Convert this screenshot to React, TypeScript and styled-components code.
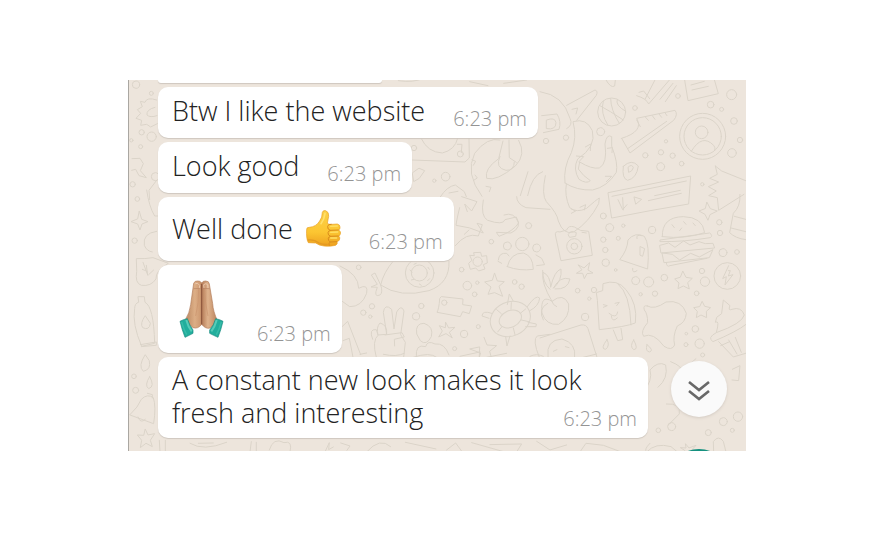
import React from "react";
import styled, { createGlobalStyle } from "styled-components";

const GlobalStyle = createGlobalStyle`
  * { box-sizing: border-box; }
  body {
    margin: 0;
    background: #ffffff;
    font-family: "Open Sans", "Noto Sans", sans-serif;
  }
`;

const Page = styled.main`
  padding: 80px 139px 80px 128px;
`;

const Chat = styled.section`
  position: relative;
  overflow: hidden;
  border-left: 1px solid #aaa7a2;
  background: #ede5dc;
  padding-bottom: 13px;
`;

const Wallpaper = styled.svg`
  position: absolute;
  inset: 0;
  width: 100%;
  height: 100%;
  fill: none;
  stroke: #dbd4c9;
  stroke-width: 3;
  stroke-linecap: round;
  stroke-linejoin: round;
`;

const MessageList = styled.ol`
  position: relative;
  display: flex;
  flex-direction: column;
  align-items: flex-start;
  gap: 4px;
  margin: 0;
  padding: 0 98px 0 29px;
  list-style: none;
`;

const PreviousBubble = styled.li`
  width: 224px;
  max-width: 100%;
  height: 3px;
  border-radius: 0 0 10px 10px;
  background: #ffffff;
  box-shadow: 0 1px 1px #cfc7bf;
`;

const Bubble = styled.li<{ $overlap?: boolean }>`
  display: grid;
  grid-template-columns: ${(p) => (p.$overlap ? "1fr" : "auto auto")};
  column-gap: 28px;
  max-width: 490px;
  padding: 0 11px 0 14px;
  border-radius: 10px;
  background: #ffffff;
  box-shadow: 0 1px 1px #cfc7bf;

  > * { grid-row: 1; }
  ${(p) => p.$overlap && "> * { grid-column: 1; }"}
`;

const textPadding = {
  single: "7px 0 11px",
  multi: "6px 0 9px",
  emoji: "13px 0 14px",
  largeEmoji: "15px 0",
};

const Text = styled.p<{ $kind?: keyof typeof textPadding }>`
  display: flex;
  align-items: center;
  gap: 13px;
  margin: 0;
  padding: ${(p) => textPadding[p.$kind ?? "single"]};
  color: #222222;
  font-size: 27px;
  font-weight: 300;
  line-height: 33px;
`;

const Time = styled.time`
  align-self: end;
  justify-self: end;
  padding-bottom: 8px;
  color: #949494;
  font-size: 20px;
  font-weight: 300;
  line-height: 22px;
  white-space: nowrap;
`;

const ScrollButton = styled.button`
  position: absolute;
  right: 19px;
  bottom: 34px;
  display: grid;
  place-items: center;
  width: 56px;
  height: 56px;
  padding: 0;
  border: 0;
  border-radius: 50%;
  background: #fafafa;
  box-shadow: 0 1px 3px #d3cbc3;
  cursor: pointer;
`;

const SendBadge = styled.div`
  position: absolute;
  right: 15px;
  bottom: -62px;
  width: 64px;
  height: 64px;
  border-radius: 50%;
  background: #15917f;
`;

const ThumbsUp = () => (
  <svg width="35" height="37" viewBox="33 29 105 111" role="img" aria-label="thumbs up">
    <defs>
      <linearGradient id="thumb" x1="0" y1="0" x2="0" y2="1">
        <stop offset="0" stopColor="#fbd04a" />
        <stop offset="0.6" stopColor="#fcc632" />
        <stop offset="1" stopColor="#eda01f" />
      </linearGradient>
    </defs>
    <path
      d="M35 87Q34 81 43 81Q64 79 74 62Q82 52 82 36Q84 29 92 31Q102 34 101 48L97 69Q100 73 111 72L127 71Q135 73 135 80Q136 87 131 89Q139 93 136 101Q135 106 131 107Q137 112 133 119Q131 123 126 124Q129 131 122 135Q107 139 87 137Q73 136 62 128L40 127Q33 115 35 87Z"
      fill="url(#thumb)"
      stroke="#e8a026"
      strokeWidth="2"
    />
    <path d="M131 89L106 90Q97 88 98 78Q99 71 110 72M131 107L107 108Q98 105 99 97Q100 91 107 90M126 124L106 125Q98 121 100 114Q101 109 107 108M106 125Q99 128 103 136" fill="none" stroke="#d98b1b" strokeWidth="3" />
    <path d="M107 78L127 77M107 96L128 95M107 113L125 113" stroke="#ffdf65" strokeWidth="4" strokeLinecap="round" />
    <path d="M38 119Q57 116 72 128Q86 134 98 132" fill="none" stroke="#e49a22" strokeWidth="4" />
    <path d="M90 39Q88 57 78 70" fill="none" stroke="#ffe06e" strokeWidth="5" strokeLinecap="round" />
  </svg>
);

const FoldedHands = () => (
  <svg width="57" height="58" viewBox="6 29 171 174" role="img" aria-label="folded hands">
    <defs>
      <linearGradient id="skin" x1="0" y1="0" x2="1" y2="0">
        <stop offset="0" stopColor="#b9855f" />
        <stop offset="0.3" stopColor="#dcae86" />
        <stop offset="0.46" stopColor="#cf9b73" />
        <stop offset="0.52" stopColor="#b67d59" />
        <stop offset="0.7" stopColor="#dfb38d" />
        <stop offset="1" stopColor="#b9815b" />
      </linearGradient>
    </defs>
    <path
      d="M71 39Q74 31 83 32Q91 31 95 38Q99 31 107 32Q117 32 118 41L128 100Q129 122 143 153L120 173Q107 177 95 162Q84 177 69 172L45 150Q59 128 62 103Z"
      fill="url(#skin)"
      stroke="#b27c59"
      strokeWidth="2"
    />
    <path d="M95 41L95 162" fill="none" stroke="#895239" strokeWidth="3" />
    <path d="M86 55Q87 97 77 137M103 55Q105 97 114 137" fill="none" stroke="#ca946e" strokeWidth="2" />
    <path d="M76 40Q84 36 89 45L88 54M102 53L101 43Q108 37 113 43L114 54" fill="none" stroke="#edc9ad" strokeWidth="3" />
    <path d="M71 55L92 54M98 54L119 55" stroke="#b98463" strokeWidth="2" />
    <path d="M30 153Q40 147 52 145Q58 164 69 179L69 189Q58 195 45 201Q36 179 30 153Z" fill="#22ae9d" stroke="#168a7e" strokeWidth="2" />
    <path d="M159 153Q149 147 137 145Q132 164 119 179L119 189Q130 195 144 201Q153 179 159 153Z" fill="#22ae9d" stroke="#168a7e" strokeWidth="2" />
    <path d="M49 149Q54 169 65 183M140 149Q135 169 124 183" fill="none" stroke="#56cbb8" strokeWidth="6" />
    <path d="M35 155Q41 177 50 193M154 155Q148 177 139 193" fill="none" stroke="#38bca8" strokeWidth="4" />
  </svg>
);

const rightDots = [
  [285, 114, 7], [182, 185, 12], [78, 203, 8], [18, 213, 8], [414, 78, 7], [512, 104, 10], [545, 118, 6],
  [575, 74, 15], [582, 153, 10], [600, 210, 8], [576, 249, 13], [378, 214, 5], [316, 256, 8], [363, 247, 8],
  [398, 257, 8], [425, 281, 7], [362, 290, 12], [487, 343, 5], [190, 438, 9], [209, 473, 12], [250, 467, 5],
  [190, 509, 8], [235, 505, 6], [196, 540, 8], [197, 578, 11], [227, 600, 4], [336, 480, 11], [538, 457, 8],
  [540, 489, 8], [549, 548, 12], [591, 546, 7], [287, 632, 12], [326, 636, 15], [373, 623, 10], [486, 603, 8],
  [495, 635, 14], [470, 670, 7], [345, 671, 8], [302, 673, 5], [162, 660, 8], [113, 662, 7], [148, 686, 5],
  [135, 741, 11], [466, 777, 10], [479, 821, 14], [438, 824, 6], [439, 791, 4], [488, 855, 6],
];

const middleDots = [
  [222, 234, 8], [283, 332, 5], [317, 320, 13], [361, 252, 9], [56, 592, 7], [365, 599, 7], [382, 647, 13],
  [412, 638, 5], [404, 673, 7], [454, 515, 7], [566, 467, 9], [524, 636, 7], [545, 650, 8], [244, 708, 8],
  [228, 739, 11], [96, 709, 8], [70, 728, 8], [91, 740, 5], [415, 770, 6], [372, 792, 11], [344, 836, 6],
];

const leftDots = [
  [48, 44, 11], [65, 187, 8], [95, 200, 14], [62, 230, 6], [34, 211, 5], [38, 343, 8], [106, 320, 12],
  [52, 387, 7], [44, 512, 8], [42, 919, 7], [47, 961, 9], [94, 70, 6], [130, 26, 5],
];

const Dots = ({ items }: { items: number[][] }) => (
  <>
    {items.map(([x, y, r]) => (
      <circle key={`${x}-${y}`} cx={x} cy={y} r={r} />
    ))}
  </>
);

const Doodles = () => (
  <Wallpaper viewBox="129 80 617 372" preserveAspectRatio="xMaxYMin slice" aria-hidden="true">
    <g transform="translate(540 70) scale(.3333)">
      <Dots items={rightDots} />
      <circle cx="215" cy="126" r="42" />
      <path d="M178 106Q210 123 250 150M190 93Q180 130 204 166M212 85Q212 120 238 160M232 88Q224 105 257 124" />
      <path d="M0 65Q70 75 90 145Q100 165 80 176M80 106L165 60Q175 63 169 76L110 151M96 118L113 114L108 132" />
      <path d="M5 137L51 132Q65 155 57 178L10 188M20 150Q45 140 48 158Q48 181 20 176Z" />
      <path d="M290 77Q320 86 326 102L390 28M350 20L315 88M297 67L311 63L329 86M360 88L399 40M376 95L409 47" />
      <path d="M434 30L444 92L535 71L520 18M456 60L505 49M453 45L493 34M197 28Q212 56 224 48L226 30" />
      <path d="M245 205L270 249L401 151Q415 133 405 121L290 145Q313 184 245 205ZM263 236L380 154M290 150L301 170M316 141L325 151M337 137L345 148M357 132L365 142M374 127L381 137" />
      <circle cx="488" cy="199" r="69" />
      <circle cx="488" cy="199" r="56" />
      <circle cx="485" cy="187" r="19" />
      <path d="M454 244Q486 190 521 226Q528 233 524 242" />
      <path d="M75 339Q69 294 94 248Q112 202 99 155Q140 143 157 182Q170 230 113 267Q98 297 117 328Q140 343 151 332Q129 318 115 297L119 276Q155 298 178 294Q203 281 195 222Q200 190 215 200L215 228Q235 280 229 307Q203 350 158 360Q110 362 75 339M109 258L131 260L116 276M196 319L215 319L199 335M202 235L217 233L216 248M136 231L152 222L151 242" />
      <path d="M79 342Q73 377 89 413Q110 430 140 415Q168 390 178 384L176 401Q148 456 101 486Q70 496 55 453Q52 430 19 395Q4 375 16 317M120 412L137 404L133 420M94 417L107 423L94 430" />
      <path d="M250 289Q275 265 295 288Q290 325 263 331Q245 326 250 289ZM265 291Q276 281 280 293Q277 305 267 307Z" />
      <path d="M205 368L452 318L446 402Q330 421 216 444ZM216 379L439 333M234 389L248 419L261 404M248 383L250 420M283 381L305 388L288 402ZM325 392L424 370M344 377L421 361" />
      <path d="M526 288L545 303L617 332M526 288L532 313L509 325L536 336L505 350L529 363L506 377L532 383L536 421L612 373" />
      <path d="M600 373Q602 410 580 430L569 488Q586 505 617 509M583 439L617 448M573 474L617 485" />
      <path d="M367 500Q365 441 430 440Q488 441 494 488Q435 508 367 500ZM361 510L509 489Q520 497 511 503Q430 516 361 515ZM360 526L386 519L405 532L431 513L450 525L477 515L496 521L519 520L524 534L364 549ZM367 549L397 553L419 570L452 550L478 561L519 539L508 563L373 578ZM379 578Q380 593 390 587L501 565M396 464L403 473M431 455L438 463M459 459L466 467M419 482L425 474" />
      <path d="M46 494Q44 482 60 486L80 480Q85 465 103 471L121 481L146 484L157 556L64 572ZM85 493Q92 479 109 488L107 499L90 502ZM126 487L139 489" />
      <circle cx="103" cy="529" r="23" />
      <circle cx="103" cy="529" r="10" />
      <path d="M240 568Q262 541 264 510Q285 485 313 499Q330 522 323 596ZM278 595Q276 613 291 602M291 506Q287 492 304 497M301 530L314 536L308 559L301 556Z" />
      <path d="M501 397L511 416L532 423L510 434L504 451L495 433L477 423L495 416ZM115 585L132 594L149 578L144 600L159 609L141 611L133 626L128 610L109 610L125 600Z" />
      <path d="M429 604L438 622L457 625L443 638L448 657L430 648L414 656L417 639L404 627L420 622ZM487 695L494 709L512 713L499 724L500 743L483 735L469 743L472 724L461 713L478 710Z" />
      <circle cx="562" cy="618" r="40" />
      <path d="M566 587L548 626L559 620L555 645L579 614L565 618L571 602L565 602" />
      <path d="M172 690L169 668L188 662L189 641Q232 626 258 659Q294 702 286 759Q259 770 179 779ZM234 642Q270 670 273 765M220 780L233 812L248 809L243 775M190 704L202 707L190 712M225 700L238 697L230 707M207 730Q230 749 233 726M214 737Q216 760 232 744" />
      <path d="M36 694Q3 639 9 607Q31 616 32 652Q43 603 63 597Q67 631 40 655Q60 617 90 627Q83 660 45 657M36 694Q0 670 6 729Q18 767 56 763Q90 743 86 702Q70 667 36 694Q38 705 50 710" />
      <path d="M322 708Q343 721 378 696Q425 688 439 730Q437 758 412 768Q397 800 404 825Q396 844 372 829Q340 785 311 799Q300 785 323 758Q323 731 313 720Q308 704 322 708Z" />
      <path d="M545 730L550 690L570 707Q563 724 576 718Q604 709 613 735Q606 761 529 788Q540 748 526 757L530 743ZM529 788Q500 803 519 815Q590 785 617 764M536 815L580 861L617 850M542 827L569 815M566 810L591 852M586 802L604 847" />
      <path d="M0 804L123 765Q139 763 144 776L171 862M24 860Q17 810 66 807Q110 820 104 862M40 844L51 839M76 830L87 833" />
      <path d="M201 809Q179 838 197 838Q211 827 201 809ZM281 810Q268 829 281 839Q297 839 281 810ZM321 824Q315 845 329 846Q343 841 321 824Z" />
      <path d="M308 970Q340 930 330 900Q354 872 377 885Q386 925 354 952M392 875Q430 890 424 905L468 866M407 953Q430 917 485 913M379 1002Q424 999 418 1032L385 1065M577 898L600 887L596 932L576 930" />
      <path d="M437 1122L447 1134L468 1126L452 1144L464 1154L445 1150L435 1158L434 1141L421 1133L437 1134ZM320 1146Q346 1117 393 1130L417 1150M521 1146L520 1115Q535 1094 550 1114L558 1146" />
      <circle cx="395" cy="1070" r="12" />
      <circle cx="355" cy="1081" r="7" />
      <circle cx="505" cy="1088" r="9" />
      <circle cx="550" cy="1055" r="12" />
      <circle cx="577" cy="1081" r="6" />
      <circle cx="594" cy="1040" r="14" />
    </g>

    <g transform="translate(340 70) scale(.3333)">
      <Dots items={middleDots} />
      <path d="M175 32Q220 39 250 25M389 35L444 47M491 40L560 30M215 270L375 276L388 264L387 205M244 206Q263 247 307 249Q345 240 353 205M352 223L366 223L364 248" />
      <path d="M480 210Q442 200 404 250Q374 310 426 379M536 211Q560 254 526 288Q470 335 440 325Q432 297 476 266L489 213M480 259Q464 294 498 301Q523 302 523 276M405 315L412 324L401 331M396 269L407 274L400 286M438 349L453 352L448 365M507 210L508 263L529 277" />
      <path d="M238 295L254 302L238 325L221 335L217 310ZM300 382Q321 349 346 345L373 365L379 380M327 369L354 364M541 377L564 305M563 377Q576 315 608 305" />
      <path d="M430 390Q421 439 443 451Q490 467 495 449L529 441Q548 473 513 489L469 487L477 499Q520 484 536 459Q523 424 492 435M530 380Q530 402 558 413L630 418M365 380L411 395L395 423L374 402L382 425M359 413Q350 449 348 466Q388 470 430 489L411 460L427 464L415 498Q379 487 346 527M373 493L387 480" />
      <circle cx="502" cy="528" r="12" />
      <circle cx="547" cy="522" r="20" />
      <circle cx="590" cy="534" r="12" />
      <path d="M502 590Q511 549 550 549Q579 557 580 598Q540 604 502 590ZM475 570Q477 547 500 550L507 558M485 580L474 574M588 555L605 565L614 584L590 587" />
      <path d="M402 548L422 547L425 559L440 557L442 579L430 584L435 597L416 603L407 594L391 598L386 580L396 571L389 556L402 557Z" />
      <circle cx="413" cy="575" r="14" />
      <path d="M122 645Q130 608 160 573M327 574Q330 640 267 662Q180 685 122 645L105 609L94 615L112 643L93 651L112 652Q99 684 120 675Q130 667 122 645" />
      <circle cx="239" cy="609" r="43" />
      <circle cx="238" cy="609" r="24" />
      <path d="M210 600L216 607M214 630L222 628M238 642L244 646M263 632L269 626M268 598L264 592M222 583L229 580" />
      <path d="M464 610L472 633L493 635L477 649L488 679L464 668L444 673L453 651L434 636L456 631ZM305 680L369 687L368 704L395 708L388 731L368 725L361 740L291 727Q297 717 299 687Z" />
      <circle cx="313" cy="698" r="8" />
      <ellipse cx="511" cy="747" rx="62" ry="51" transform="rotate(-25 511 747)" />
      <ellipse cx="511" cy="747" rx="35" ry="25" transform="rotate(-25 511 747)" />
      <path d="M502 704L508 672L519 692M562 710Q588 672 599 684Q597 708 570 722M564 757L589 762L588 770L557 770M497 800L501 828L510 798M447 745L426 738Q427 720 455 730M470 719L484 731M514 698L513 718M557 717L541 730M566 755L544 750M525 794L520 774M473 786L486 770" />
      <path d="M109 862Q95 811 115 795L140 793L130 727Q134 699 155 718L162 777L170 726Q184 702 192 723L182 794L196 817L191 862M135 795L186 788L193 801L163 808L164 828M98 808Q85 776 109 779L114 795Q108 772 120 759Q143 765 140 793" />
      <path d="M230 791Q225 760 252 760Q282 770 274 800Q259 829 242 813ZM229 862Q225 820 257 830Q262 810 285 822Q314 818 327 855M317 757L326 774L345 772L328 787L337 804L318 791L296 801L307 783L298 767L315 773Z" />
      <path d="M432 802L441 825L470 827L449 844L454 862M418 862L422 849L389 837L418 831ZM598 862Q576 808 592 798L630 793M610 750Q592 717 623 700M0 588Q56 613 56 655Q86 639 80 670Q65 711 29 710L4 692M0 776L23 754L62 854M9 812L28 805L39 862M608 601Q607 637 630 658" />
    </g>

    <g transform="translate(120 70) scale(.3333)">
      <Dots items={leftDots} />
      <path d="M110 90Q80 80 75 97L61 94L67 110L52 119L62 130L48 145L65 151L62 166L80 163L92 171L112 161M105 112Q78 119 81 135Q90 144 111 137M36 266L60 265L70 281L61 302L79 323L57 317L47 298L35 301M89 389L87 361L110 331" />
      <path d="M58 424L65 448L84 455L66 462L60 480L53 462L33 455L52 447ZM80 360Q87 410 104 438L115 438M110 484Q67 490 73 526Q80 544 97 546M50 566Q75 567 99 563L145 580Q106 602 108 627Q93 650 64 646Q44 640 50 605ZM69 577L83 615M83 615L79 586M86 614L101 600M81 604L67 598" />
      <path d="M55 680L73 680L75 697Q101 709 104 820L65 829Q36 762 44 716Q44 700 55 697ZM61 824L109 816L109 826L64 830M75 738Q59 761 68 773Q88 783 91 761ZM75 855Q53 889 70 904Q94 899 88 873ZM89 920Q72 947 86 956Q106 950 89 920Z" />
      <path d="M30 1034Q55 1011 64 988Q82 970 100 983Q109 1011 101 1060ZM54 1041Q61 1063 76 1048M82 970L97 974L97 984M76 1078L84 1095L104 1091L91 1111L97 1130L78 1120L61 1133L65 1111L52 1095L70 1096Z" />
      <path d="M118 1111L120 1146M136 1111L136 1146M210 1120Q250 1145 320 1117M235 1120L280 1119M394 1115L390 1146M409 1117L409 1146M448 1140Q460 1100 492 1118Q519 1110 510 1146M615 1146L628 1118L626 1139L640 1131M662 1119L690 1128L681 1141M740 1146Q780 1100 812 1130M856 1117L948 1137M980 1140L1007 1119L1027 1146M1055 1118L1154 1146M1110 1124L1205 1122L1190 1146M1250 1114L1290 1140L1340 1125M1380 1146L1398 1120L1450 1126L1504 1146M1590 1120Q1570 1140 1580 1146" />
      <path d="M720 853L740 849M790 853Q830 862 853 850M880 862Q930 845 950 862M1020 859L1080 846M1100 862L1160 850M1230 859Q1250 849 1270 859M1390 862L1430 852" />
    </g>
  </Wallpaper>
);

export default function App() {
  return (
    <>
      <GlobalStyle />
      <Page>
        <Chat aria-label="Conversation">
          <Doodles />
          <MessageList>
            <PreviousBubble aria-hidden="true" />
            <Bubble>
              <Text>Btw I like the website</Text>
              <Time dateTime="18:23">6:23 pm</Time>
            </Bubble>
            <Bubble>
              <Text>Look good</Text>
              <Time dateTime="18:23">6:23 pm</Time>
            </Bubble>
            <Bubble>
              <Text $kind="emoji">
                Well done <ThumbsUp />
              </Text>
              <Time dateTime="18:23">6:23 pm</Time>
            </Bubble>
            <Bubble>
              <Text $kind="largeEmoji">
                <FoldedHands />
              </Text>
              <Time dateTime="18:23">6:23 pm</Time>
            </Bubble>
            <Bubble $overlap>
              <Text $kind="multi">A constant new look makes it look fresh and interesting</Text>
              <Time dateTime="18:23">6:23 pm</Time>
            </Bubble>
          </MessageList>
          <ScrollButton type="button" aria-label="Scroll to latest message">
            <svg width="24" height="24" viewBox="0 0 24 24" fill="none" stroke="#686868" strokeWidth="2.6">
              <path d="M2 5L12 13L22 5M2 14L12 22L22 14" />
            </svg>
          </ScrollButton>
          <SendBadge />
        </Chat>
      </Page>
    </>
  );
}
